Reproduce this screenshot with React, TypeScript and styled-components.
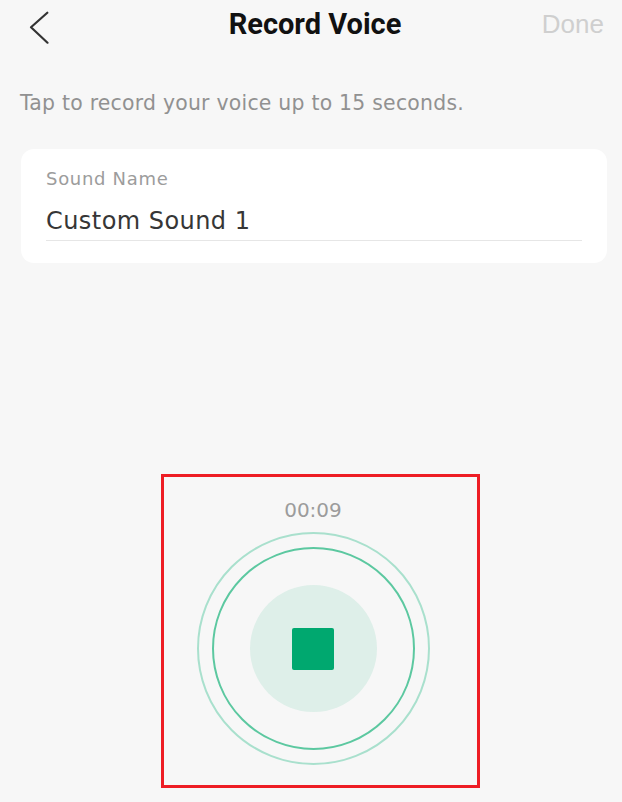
import React from "react";
import styled, { createGlobalStyle } from "styled-components";

const GlobalStyle = createGlobalStyle`
  html, body {
    margin: 0;
    padding: 0;
    background: #f7f7f7;
  }
  body {
    font-family: "DejaVu Sans", "Liberation Sans", sans-serif;
  }
`;

const Page = styled.div`
  width: 622px;
  min-height: 802px;
  background: #f7f7f7;
  display: flex;
  flex-direction: column;
`;

const NavBar = styled.div`
  height: 48px;
  display: grid;
  grid-template-columns: 1fr auto 1fr;
  align-items: center;
  padding: 0 18px 0 26px;
`;

const BackButton = styled.button`
  justify-self: start;
  background: none;
  border: none;
  padding: 0;
  width: 24px;
  height: 40px;
  display: flex;
  align-items: center;
  cursor: pointer;
`;

const Title = styled.div`
  font-family: Roboto, "Liberation Sans", sans-serif;
  font-weight: 700;
  font-size: 29px;
  color: #111;
`;

const DoneButton = styled.div`
  justify-self: end;
  font-family: "Liberation Sans", Arial, sans-serif;
  font-size: 26px;
  color: #cfcfcf;
`;

const Hint = styled.p`
  margin: 41px 0 0 20px;
  font-size: 20.4px;
  line-height: 28px;
  letter-spacing: 0.24px;
  color: #919191;
`;

const Card = styled.div`
  margin: 32px 15px 0 21px;
  background: #fff;
  border-radius: 13px;
  padding: 19px 25px 22px 25px;
  display: flex;
  flex-direction: column;
`;

const FieldLabel = styled.div`
  font-size: 18px;
  line-height: 22px;
  letter-spacing: 0.7px;
  color: #9c9c9c;
`;

const FieldInput = styled.div`
  margin-top: 16px;
  padding-bottom: 4px;
  font-size: 24px;
  line-height: 30px;
  letter-spacing: 0.45px;
  color: #363636;
  border-bottom: 1px solid #e6e6e6;
`;

const RecordFrame = styled.div`
  margin: 211px 0 0 161px;
  width: 319px;
  height: 314px;
  box-sizing: border-box;
  border: 3px solid #ee1d25;
  padding-right: 15px;
  display: flex;
  flex-direction: column;
  align-items: center;
`;

const Timer = styled.div`
  margin-top: 21px;
  font-size: 20px;
  line-height: 24px;
  color: #9c9c9c;
`;

const Ring = styled.div<{ $size: number; $color: string }>`
  width: ${(p) => p.$size}px;
  height: ${(p) => p.$size}px;
  border-radius: 50%;
  border: 2px solid ${(p) => p.$color};
  box-sizing: border-box;
  display: flex;
  align-items: center;
  justify-content: center;
`;

const OuterRing = styled(Ring)`
  margin-top: 10px;
`;

const Pad = styled.div`
  width: 127px;
  height: 127px;
  border-radius: 50%;
  background: #deefe9;
  display: flex;
  align-items: center;
  justify-content: center;
`;

const StopSquare = styled.div`
  width: 42px;
  height: 42px;
  border-radius: 2px;
  background: #00a86f;
`;

export default function App() {
  return (
    <Page>
      <GlobalStyle />
      <NavBar>
        <BackButton aria-label="Back">
          <svg width="24" height="40" viewBox="0 0 24 40" fill="none">
            <path d="M21.3 8.7 L5 23.3 L21.5 38.7" stroke="#333" strokeWidth="2.2" strokeLinecap="round" strokeLinejoin="round" />
          </svg>
        </BackButton>
        <Title>Record Voice</Title>
        <DoneButton>Done</DoneButton>
      </NavBar>
      <Hint>Tap to record your voice up to 15 seconds.</Hint>
      <Card>
        <FieldLabel>Sound Name</FieldLabel>
        <FieldInput>Custom Sound 1</FieldInput>
      </Card>
      <RecordFrame>
        <Timer>00:09</Timer>
        <OuterRing $size={233} $color="#a9e0cd">
          <Ring $size={203} $color="#5cc8a0">
            <Pad>
              <StopSquare />
            </Pad>
          </Ring>
        </OuterRing>
      </RecordFrame>
    </Page>
  );
}
